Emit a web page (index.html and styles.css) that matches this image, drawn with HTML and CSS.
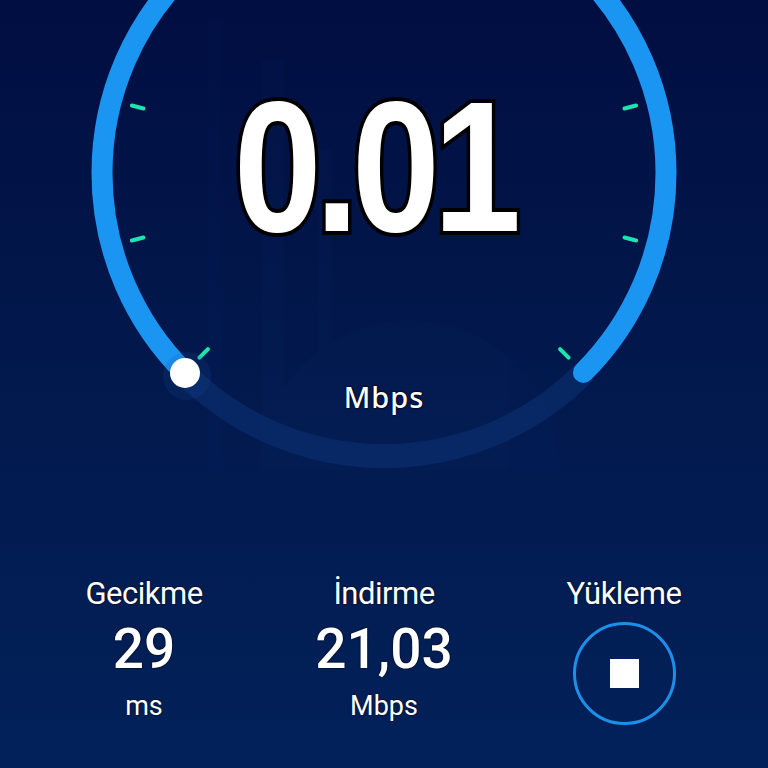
FILE: index.html
```html
<!DOCTYPE html>
<html>
  <head>
    <meta name="viewport" content="width=device-width, initial-scale=1.0" />
    <link rel="stylesheet" href="styles.css">
  </head>
  <body>
    <main>
      <section id="gauge">
        <svg class="dial" viewBox="0 0 768 470" width="768" height="470">
          <g class="watermark">
            <rect x="208" y="20" width="14" height="450" />
            <rect x="262" y="60" width="22" height="410" />
            <rect x="318" y="150" width="14" height="320" />
            <circle cx="410" cy="470" r="150" />
          </g>
          <path class="track" d="M 584.4 372.4 A 282 282 0 0 1 183.6 372.4" />
          <path class="arc" d="M 184.6 372.4 A 282 282 0 1 1 583.4 372.4" />
          <g class="ticks" transform="translate(384 173)">
            <line x1="-261" y1="0" x2="-249" y2="0" transform="rotate(-45)" />
            <line x1="-261" y1="0" x2="-249" y2="0" transform="rotate(-15)" />
            <line x1="-261" y1="0" x2="-249" y2="0" transform="rotate(15)" />
            <line x1="-261" y1="0" x2="-249" y2="0" transform="rotate(45)" />
            <line x1="-261" y1="0" x2="-249" y2="0" transform="rotate(75)" />
            <line x1="-261" y1="0" x2="-249" y2="0" transform="rotate(105)" />
            <line x1="-261" y1="0" x2="-249" y2="0" transform="rotate(135)" />
            <line x1="-261" y1="0" x2="-249" y2="0" transform="rotate(165)" />
            <line x1="-261" y1="0" x2="-249" y2="0" transform="rotate(195)" />
            <line x1="-261" y1="0" x2="-249" y2="0" transform="rotate(225)" />
          </g>
          <circle class="glow" cx="187" cy="376" r="24" />
          <circle class="needle" cx="185" cy="373" r="15" />
        </svg>
        <div class="readout">
          <div class="speed">0.01</div>
          <div class="speed-unit">Mbps</div>
        </div>
      </section>

      <section id="stats">
        <div class="stat">
          <span class="label">Gecikme</span>
          <span class="value">29</span>
          <span class="unit">ms</span>
        </div>
        <div class="stat">
          <span class="label">İndirme</span>
          <span class="value">21,03</span>
          <span class="unit">Mbps</span>
        </div>
        <div class="stat">
          <span class="label">Yükleme</span>
          <button class="stop" aria-label="Durdur"><span class="square"></span></button>
        </div>
      </section>
    </main>
  </body>
</html>
```

FILE: styles.css
```css
html {
  height: 100%;
  padding: 0;
  margin: 0;
}
body {
  height: 100%;
  margin: 0;
  padding: 0;
  font-family: Roboto, sans-serif;
  color: white;
  background: linear-gradient(#010e41 0%, #021a4e 55%, #02215a 100%);
  overflow: hidden;
}
main {
  height: 100%;
  display: flex;
  flex-flow: column;
}

#gauge {
  display: grid;
  height: 470px;
}
#gauge > * {
  grid-area: 1 / 1;
}
.dial {
  display: block;
}
.watermark {
  fill: #3a6ad0;
  opacity: 0.022;
}
.track {
  fill: none;
  stroke: #0b3173;
  stroke-width: 24;
  opacity: 0.6;
}
.arc {
  fill: none;
  stroke: #1b95f2;
  stroke-width: 21;
  stroke-linecap: round;
}
.ticks line {
  stroke: #1de5b0;
  stroke-width: 4;
  stroke-linecap: round;
}
.glow {
  fill: #1b4f9c;
  opacity: 0.18;
}
.needle {
  fill: white;
}

.readout {
  display: flex;
  flex-flow: column;
  align-items: center;
  padding-top: 62px;
}
.speed {
  font-family: "Liberation Sans", Arial, sans-serif;
  font-weight: bold;
  font-size: 186px;
  line-height: 210px;
  letter-spacing: -8px;
  margin-right: 20px;
  transform: scaleX(0.85);
  -webkit-text-stroke: 8px #000;
  paint-order: stroke fill;
}
.speed-unit {
  margin-top: 105px;
  font-family: "Noto Sans", sans-serif;
  font-weight: 500;
  font-size: 29px;
  letter-spacing: 1px;
  text-shadow: 0 0 2px #000, 0 0 2px #000;
}

#stats {
  display: grid;
  grid-template-columns: repeat(3, 240px);
  padding: 106px 24px 0;
}
.stat {
  display: flex;
  flex-flow: column;
  align-items: center;
  text-shadow: 0 0 2px #000;
}
.label {
  font-size: 31px;
  line-height: 36px;
  letter-spacing: -0.5px;
}
.value {
  font-size: 55px;
  font-weight: 500;
  line-height: 64px;
  margin-top: 5px;
}
.unit {
  font-size: 27px;
  line-height: 40px;
  margin-top: 5px;
}
.stop {
  margin-top: 10px;
  width: 103px;
  height: 103px;
  border-radius: 50%;
  border: 3px solid #1e8fe8;
  background: none;
  display: flex;
  align-items: center;
  justify-content: center;
  padding: 0;
}
.square {
  width: 29px;
  height: 29px;
  background: white;
}
```
